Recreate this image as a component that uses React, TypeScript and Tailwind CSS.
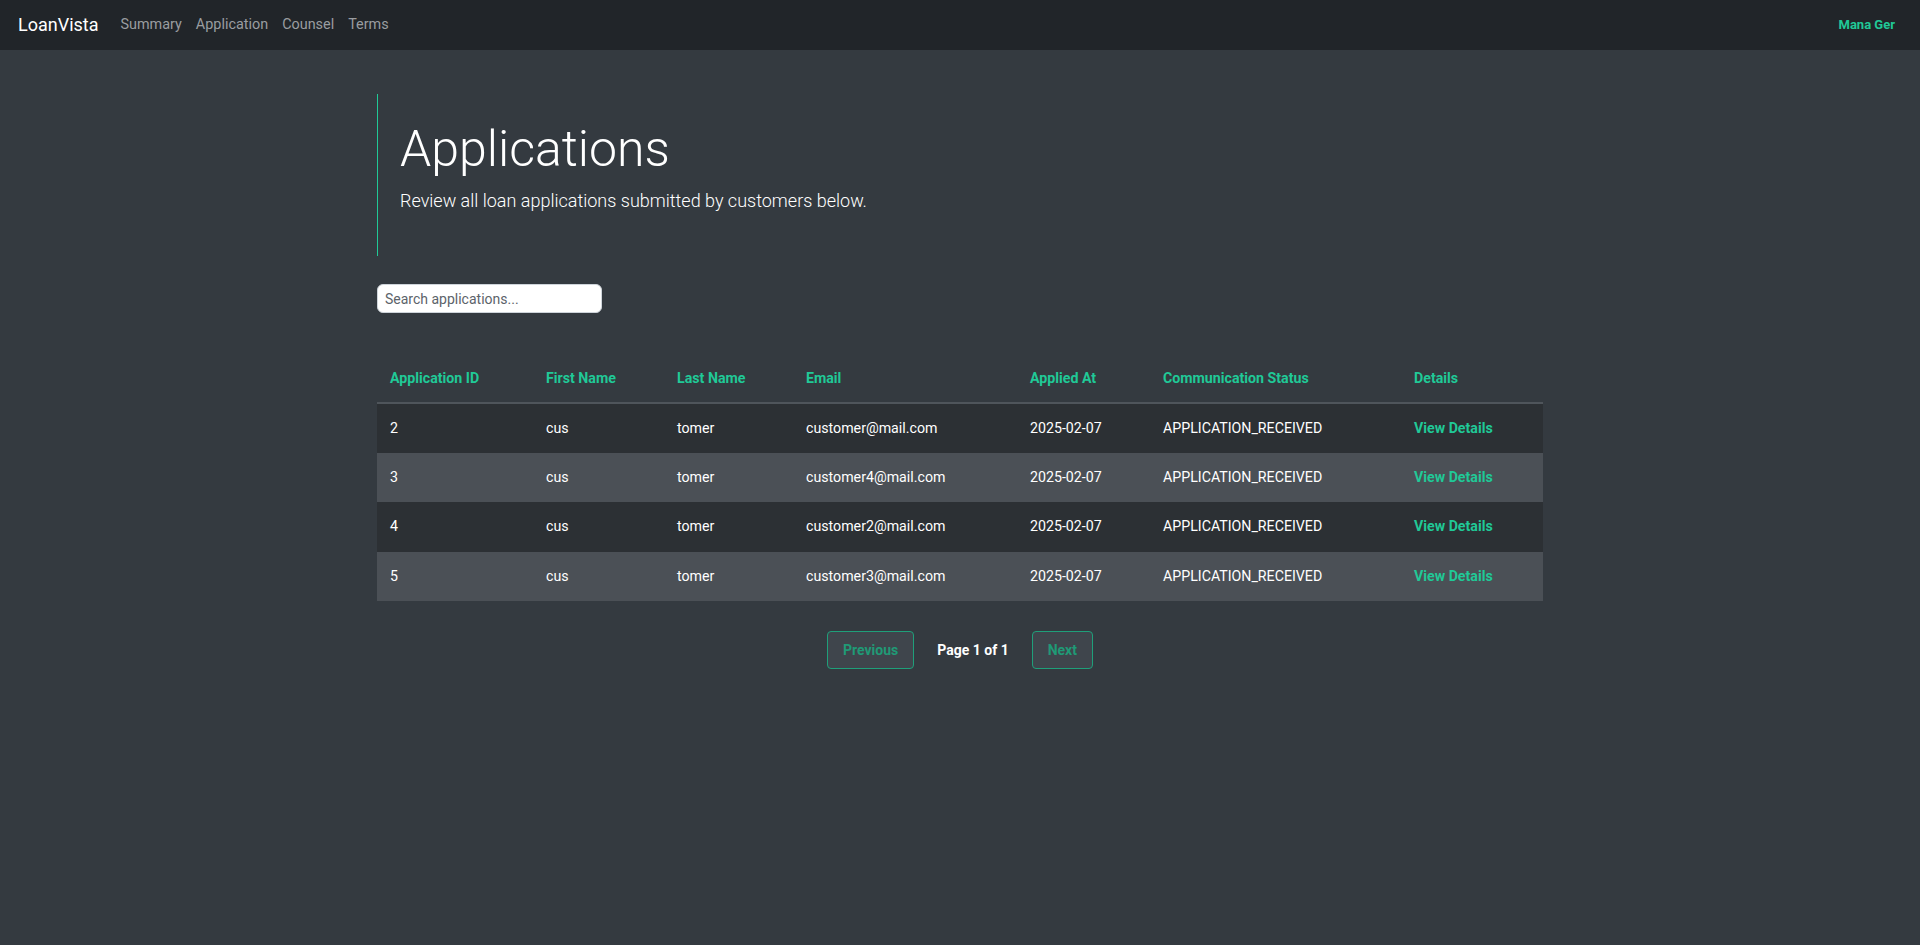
export default function App() {
  const links = ["Summary", "Application", "Counsel", "Terms"];
  const rows = [
    { id: 2, email: "customer@mail.com" },
    { id: 3, email: "customer4@mail.com" },
    { id: 4, email: "customer2@mail.com" },
    { id: 5, email: "customer3@mail.com" },
  ];
  const cols = [156, 131, 129, 224, 133, 251, 142];
  const heads = ["Application ID", "First Name", "Last Name", "Email", "Applied At", "Communication Status", "Details"];
  return (
    <div className="min-h-[945px] bg-[#343a40] font-['Roboto','Liberation_Sans',sans-serif]">
      <nav className="h-[50px] bg-[#212529] flex items-center justify-between pl-[18px] pr-[25px]">
        <div className="flex items-center">
          <span className="text-[18px] text-white mr-[15px] leading-none">LoanVista</span>
          {links.map((l) => (
            <a key={l} className="px-[7px] text-[14.4px] text-[#9a9da0] leading-none">
              {l}
            </a>
          ))}
        </div>
        <span className="text-[13px] font-bold text-[#20c997]">Mana Ger</span>
      </nav>
      <main className="w-[1166px] mx-auto">
        <div className="mt-[44px] h-[162px] border-l border-[#20c997] pl-[22px] pt-[25px]">
          <h1 className="text-[50px] font-light leading-[1.2] text-white">Applications</h1>
          <p className="mt-[8px] text-[18px] font-light leading-[1.5] text-white">
            Review all loan applications submitted by customers below.
          </p>
        </div>
        <div className="mt-[28px]">
          <input
            placeholder="Search applications..."
            className="w-[225px] h-[29px] rounded-[6px] bg-white border border-[#ced4da] px-[7px] text-[14px] text-[#333] placeholder:text-[#5c636a] outline-none"
          />
        </div>
        <table className="mt-[42px] w-full table-fixed border-collapse text-[14.2px]">
          <colgroup>
            {cols.map((w, i) => (
              <col key={i} style={{ width: w }} />
            ))}
          </colgroup>
          <thead>
            <tr className="border-b-2 border-[#4f555b]">
              {heads.map((h) => (
                <th key={h} className="h-[48px] px-[13px] text-left font-bold text-[#20c997]">
                  {h}
                </th>
              ))}
            </tr>
          </thead>
          <tbody>
            {rows.map((r, i) => (
              <tr key={r.id} className={i % 2 === 0 ? "bg-[#2c3034]" : "bg-[#4b5056]"}>
                <td className="h-[49.5px] px-[13px] text-white">{r.id}</td>
                <td className="px-[13px] text-white">cus</td>
                <td className="px-[13px] text-white">tomer</td>
                <td className="px-[13px] text-white">{r.email}</td>
                <td className="px-[13px] text-white">2025-02-07</td>
                <td className="px-[13px] text-white">APPLICATION_RECEIVED</td>
                <td className="px-[13px] font-bold text-[#20c997]">View Details</td>
              </tr>
            ))}
          </tbody>
        </table>
        <div className="mt-[30px] flex items-center justify-center gap-[23px]">
          <button className="h-[38px] px-[15px] rounded-[4px] border border-[#1f9f7a] bg-[#3f454c] text-[14px] font-bold text-[#1f9a76]">
            Previous
          </button>
          <span className="text-[14px] font-bold text-white">Page 1 of 1</span>
          <button className="h-[38px] px-[15px] rounded-[4px] border border-[#1f9f7a] bg-[#3f454c] text-[14px] font-bold text-[#1f9a76]">
            Next
          </button>
        </div>
      </main>
    </div>
  );
}
